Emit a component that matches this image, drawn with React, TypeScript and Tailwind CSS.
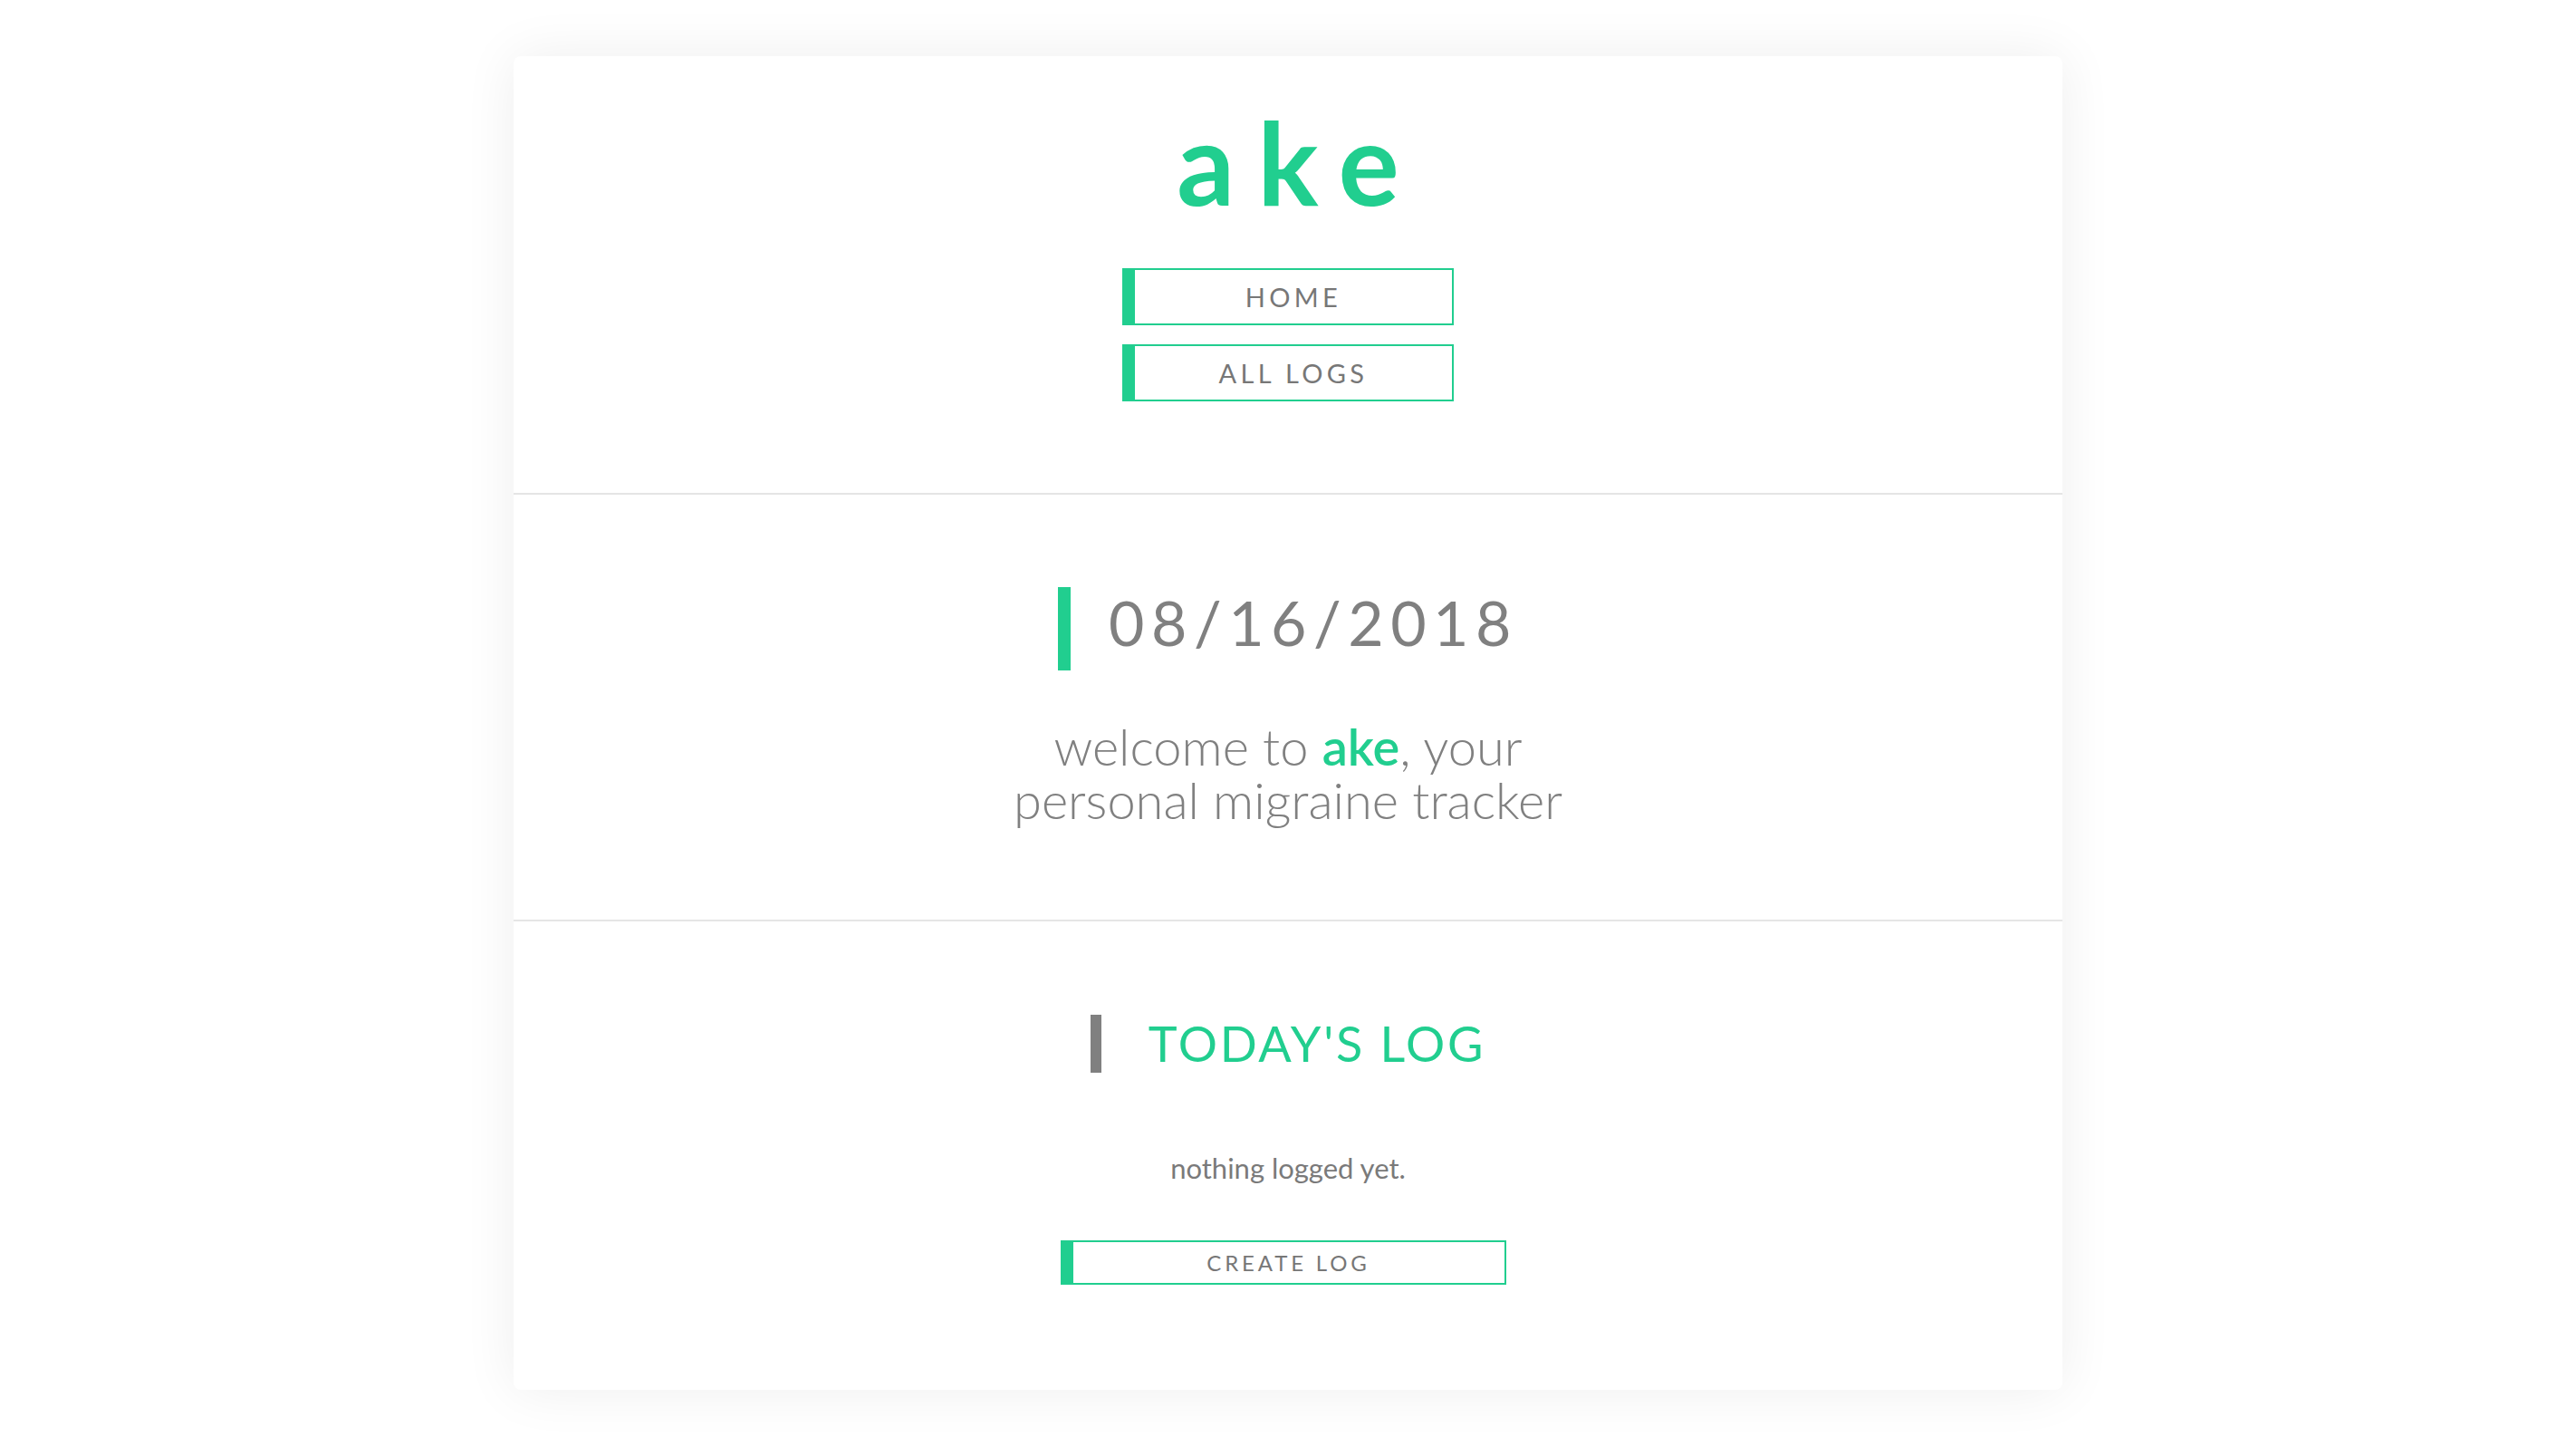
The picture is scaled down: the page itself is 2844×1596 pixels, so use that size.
const GREEN = 'text-[#21ce8f]';

function NavButton({ label, className = '' }: { label: string; className?: string }) {
  return (
    <button
      className={`flex items-center justify-center border-2 border-l-[14px] border-[#21ce8f] bg-white text-[#777] uppercase ${className}`}
    >
      {label}
    </button>
  );
}

export default function App() {
  return (
    <div className="min-h-screen bg-white py-[62px] font-['Lato','Liberation_Sans',sans-serif]">
      <div className="mx-auto w-[1710px] rounded-lg bg-white shadow-[0_0_60px_rgba(0,0,0,0.07)]">
        {/* header */}
        <header className="flex flex-col items-center border-b-2 border-[#e5e5e5] pt-[54px] pb-[101px]">
          <h1 className={`pl-[0.2em] text-[126px] leading-none font-bold tracking-[0.2em] ${GREEN}`}>
            ake
          </h1>
          <nav className="mt-[54px] flex flex-col gap-[21px]">
            <NavButton label="Home" className="h-[63px] w-[366px] text-[29px] tracking-[0.15em]" />
            <NavButton label="All Logs" className="h-[63px] w-[366px] text-[29px] tracking-[0.15em]" />
          </nav>
        </header>

        {/* date + welcome */}
        <section className="flex flex-col items-center border-b-2 border-[#e5e5e5] pt-[102px] pb-[103px]">
          <div className="flex items-start gap-[42px]">
            <span className="h-[92px] w-[14px] bg-[#21ce8f]" />
            <h2 className="mt-[5px] text-[68px] leading-none tracking-[0.11em] text-[#808080]">
              08/16/2018
            </h2>
          </div>
          <p className="mt-[54px] text-center text-[56px] leading-[59px] font-light text-[#808080]">
            welcome to <span className={`font-semibold ${GREEN}`}>ake</span>, your
            <br />
            personal migraine tracker
          </p>
        </section>

        {/* today's log */}
        <section className="flex flex-col items-center pt-[103px] pb-[116px]">
          <div className="flex items-center gap-[52px]">
            <span className="h-[64px] w-[12px] bg-[#808080]" />
            <h3 className={`text-[54px] leading-none tracking-[0.05em] uppercase ${GREEN}`}>
              Today's Log
            </h3>
          </div>
          <p className="mt-[90px] text-[31px] leading-none text-[#7a7a7a]">nothing logged yet.</p>
          <NavButton
            label="Create Log"
            className="mt-[64px] mr-[11px] h-[49px] w-[492px] text-[24px] tracking-[0.16em]"
          />
        </section>
      </div>
    </div>
  );
}
